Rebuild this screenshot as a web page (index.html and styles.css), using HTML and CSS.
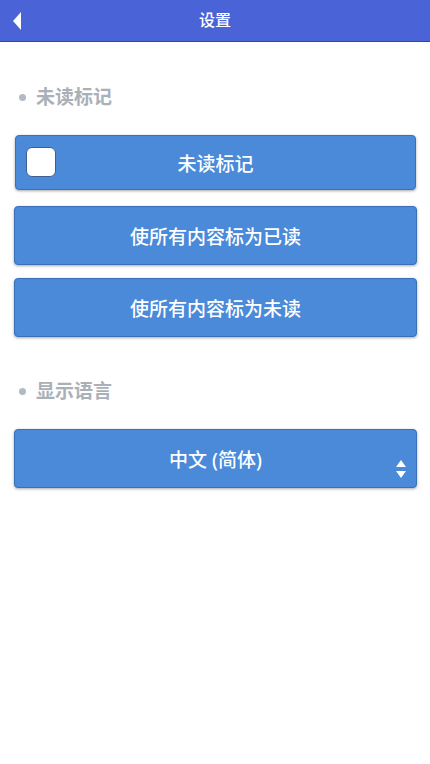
FILE: index.html
```html
<!DOCTYPE html>
<html lang="zh-CN">
<head>
<meta charset="utf-8">
<title>设置</title>
<link rel="stylesheet" href="styles.css">
</head>
<body>
<header class="bar">
  <a class="back" href="#" aria-label="返回">
    <svg width="9" height="18" viewBox="0 0 9 18"><path d="M8 0 L0 9 L8 18 Z" fill="#fff"/></svg>
  </a>
  <h1 class="title">设置</h1>
</header>
<main class="content">
  <div class="label"><span class="dot"></span>未读标记</div>
  <div class="btn btn-check"><span class="box"></span><span class="txt">未读标记</span></div>
  <div class="btn btn-gap1">使所有内容标为已读</div>
  <div class="btn btn-gap2">使所有内容标为未读</div>
  <div class="label label2"><span class="dot"></span>显示语言</div>
  <div class="btn btn-select">中文 (简体)
    <svg class="arrows" width="10" height="18" viewBox="0 0 10 18"><path d="M5 0 L10 7 L0 7 Z M0 11 L10 11 L5 18 Z" fill="#fff"/></svg>
  </div>
</main>
</body>
</html>
```
FILE: styles.css
```css
html, body { margin: 0; padding: 0; background: #fff; }
body { font-family: "Noto Sans", "Noto Sans CJK SC", sans-serif; width: 430px; height: 764px; overflow: hidden; }
.bar {
  height: 41px; background: #4a63d7; border-bottom: 1px solid #34479a;
  display: flex; align-items: center; justify-content: center; position: relative;
}
.back { position: absolute; left: 13px; top: 12px; display: block; width: 9px; height: 18px; }
.back svg { display: block; }
.title { margin: 0; font-size: 16px; font-weight: 500; color: #fff; line-height: 41px; }
.content { padding: 43px 13px 0 14px; }
.label {
  display: flex; align-items: center; gap: 10px; padding-left: 5px;
  font-size: 19px; line-height: 24px; font-weight: 700; color: #aab0b7;
}
.dot { width: 7px; height: 7px; border-radius: 50%; background: #b4bac1; margin-top: 1px; }
.label2 { margin-top: 42px; }
.btn {
  box-sizing: border-box; height: 59px; background: #4a8ad9;
  border: 1px solid #3a70b8; border-radius: 4px;
  box-shadow: 0 1px 3px rgba(0,0,0,0.35);
  color: #fff; font-size: 19px; font-weight: 500;
  display: flex; align-items: center; justify-content: center; position: relative;
}
.btn-check { height: 55px; margin: 26px 1px 0 1px; }
.box {
  position: absolute; left: 10px; top: 11px; width: 30px; height: 30px; box-sizing: border-box;
  background: #fff; border: 1px solid #3e5f8f; border-radius: 6px;
}
.btn-gap1 { margin-top: 16px; }
.btn-gap2 { margin-top: 13px; }
.btn-select { margin-top: 26px; height: 59px; }
.arrows { position: absolute; right: 10px; top: 30px; }
```
